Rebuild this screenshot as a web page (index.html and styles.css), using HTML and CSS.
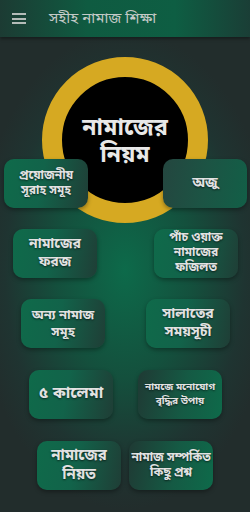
FILE: index.html
```html
<!DOCTYPE html>
<html lang="bn">
  <head>
    <meta charset="UTF-8" />
    <meta name="viewport" content="width=device-width, initial-scale=1.0" />
    <title>সহীহ নামাজ শিক্ষা</title>
    <link rel="stylesheet" href="styles.css">
  </head>
  <body>
    <header class="topbar">
      <button class="menu" aria-label="menu">
        <span></span><span></span><span></span>
      </button>
      <h1 class="title">সহীহ নামাজ শিক্ষা</h1>
    </header>

    <main class="content">
      <div class="ring">
        <div class="core">নামাজের<br>নিয়ম</div>
      </div>

      <div class="row row1">
        <a class="tile">প্রয়োজনীয়<br>সূরাহ সমূহ</a>
        <a class="tile dim">অজু</a>
      </div>
      <div class="row row2">
        <a class="tile lg">নামাজের<br>ফরজ</a>
        <a class="tile">পাঁচ ওয়াক্ত<br>নামাজের<br>ফজিলত</a>
      </div>
      <div class="row row3">
        <a class="tile md">অন্য নামাজ<br>সমূহ</a>
        <a class="tile lg">সালাতের<br>সময়সূচী</a>
      </div>
      <div class="row row4">
        <a class="tile big">৫ কালেমা</a>
        <a class="tile rev small">নামজে মনোযোগ<br>বৃদ্ধির উপায়</a>
      </div>
      <div class="row row5">
        <a class="tile xl">নামাজের<br>নিয়ত</a>
        <a class="tile rev">নামাজ সম্পর্কিত<br>কিছু প্রশ্ন</a>
      </div>
    </main>
  </body>
</html>
```

FILE: styles.css
```css
body {
  margin: 0;
  height: 512px;
  overflow: hidden;
  font-family: "Noto Sans Bengali", "Noto Sans", sans-serif;
  background: radial-gradient(ellipse 150px 240px at 125px 270px, #0d6a4a 0%, #14503d 45%, #1f3431 80%, #222d2c 100%);
  color: #e4e4e4;
}

.topbar {
  height: 37px;
  display: flex;
  align-items: center;
  background: linear-gradient(90deg, #1c3b33 0%, #0f5b41 35%, #0e5e43 70%, #1a3e36 100%);
  box-shadow: 0 2px 3px rgba(0, 0, 0, 0.35);
}

.menu {
  width: 14px;
  height: 11px;
  margin: 0 23px 0 12px;
  padding: 0;
  border: none;
  background: none;
  display: flex;
  flex-direction: column;
  justify-content: space-between;
}

.menu span {
  display: block;
  height: 2px;
  background: #b4bcb8;
}

.title {
  margin: 0;
  font-size: 15px;
  font-weight: normal;
  color: #c4cac7;
}

.content {
  display: flex;
  flex-direction: column;
  padding-top: 20px;
}

.ring {
  width: 126px;
  height: 126px;
  margin: 0 auto;
  border: 20px solid #d6a922;
  border-radius: 50%;
  background: #000;
  display: flex;
  align-items: center;
  justify-content: center;
}

.core {
  font-size: 23px;
  font-weight: bold;
  line-height: 27px;
  text-align: center;
  color: #e8e8e8;
  padding-top: 6px;
}

.row {
  display: flex;
  justify-content: space-between;
  margin-top: 21px;
  position: relative;
}

.row1 {
  margin-top: -64px;
  padding: 0 3px 0 4px;
}

.row2 { padding: 0 12px 0 13px; }
.row3 { padding: 0 20px 0 21px; }
.row4 { padding: 0 28px 0 29px; margin-top: 22px; }
.row5 { padding: 0 37px 0 37px; margin-top: 22px; }

.tile {
  width: 84px;
  height: 49px;
  border-radius: 10px;
  display: flex;
  align-items: center;
  justify-content: center;
  text-align: center;
  font-size: 12px;
  font-weight: bold;
  line-height: 15px;
  color: #e2e2e2;
  text-shadow: 0 1px 2px rgba(0, 0, 0, 0.6);
  background: linear-gradient(100deg, #0f6a4a 0%, #12634a 45%, #1f3e36 100%);
  box-shadow: 0 2px 4px rgba(0, 0, 0, 0.35);
}

.tile.dim {
  background: linear-gradient(100deg, #24463f 0%, #1c5444 50%, #125f47 100%);
  font-size: 14px;
}

.tile.rev {
  background: linear-gradient(100deg, #1f3a34 0%, #155a44 55%, #0e6a4a 100%);
}

.tile.md {
  font-size: 13px;
  line-height: 17px;
}

.tile.lg {
  font-size: 14px;
  line-height: 18px;
}

.tile.xl {
  font-size: 15px;
  line-height: 19px;
}

.tile.big {
  font-size: 16px;
}

.tile.small {
  font-size: 10px;
  line-height: 14px;
}
```
